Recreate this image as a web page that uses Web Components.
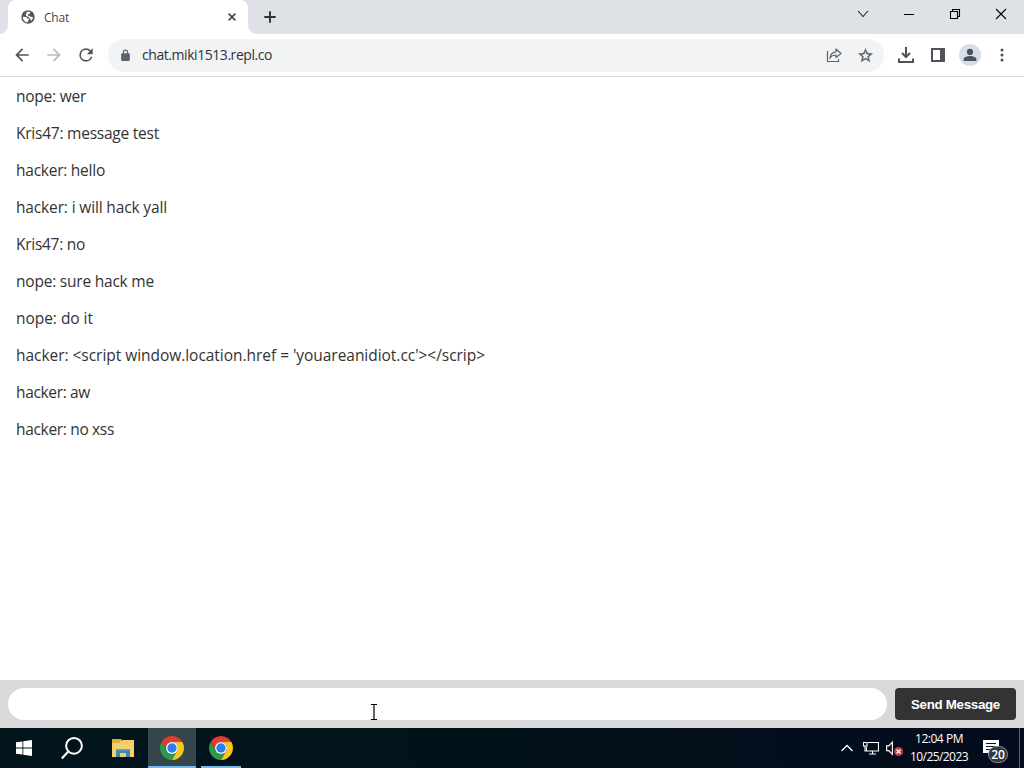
<!DOCTYPE html>
<html lang="en">
<head>
<meta charset="utf-8">
<title>Chat</title>
<style>
    html,
    body {
        margin: 0;
        height: 100%;
        overflow: hidden;
        font-family: "Open Sans", "Noto Sans", sans-serif;
    }
</style>
</head>
<body>
<desktop-screen>
    <browser-tabs slot="tabs" label="Chat"></browser-tabs>
    <browser-toolbar slot="toolbar" url="chat.miki1513.repl.co"></browser-toolbar>
    <chat-log slot="page">
        <chat-message width="70">nope: wer</chat-message>
        <chat-message width="143">Kris47: message test</chat-message>
        <chat-message width="89">hacker: hello</chat-message>
        <chat-message width="151">hacker: i will hack yall</chat-message>
        <chat-message width="69">Kris47: no</chat-message>
        <chat-message width="138">nope: sure hack me</chat-message>
        <chat-message width="77">nope: do it</chat-message>
        <chat-message width="469">hacker: &lt;script window.location.href = 'youareanidiot.cc'&gt;&lt;/scrip&gt;</chat-message>
        <chat-message width="74">hacker: aw</chat-message>
        <chat-message width="98">hacker: no xss</chat-message>
    </chat-log>
    <chat-composer slot="composer">Send Message</chat-composer>
    <task-bar slot="taskbar"></task-bar>
</desktop-screen>

<script>
const icons = {
    globe: ['0 0 24 24', '<circle cx="12" cy="12" r="11.500" fill="#53575b"/><path fill="#fff" d="M3.2 11.5 9 12.2l2 2.3 2.5.5.5 2-2.3 1.8-.7 2.5C6.800 21 3.200 17 3.200 11.500zM9.500 3.500c2-.7 4.500-.7 6.300.2l-.8 2.800-2.800.8-.7 2.200 3.300.6 1.700 2 2.500-.5 1.500 1.400c-.3 2.500-1.600 4.600-3.400 5.900l-.6-3.900-2.500-1-1-2.500-3.500-.8-1.700-2.500 1.700-1.700z"/>'],
    close: ['0 0 16 16', '<path d="m3.500 3.500 9 9m0-9-9 9" fill="none" stroke="#3c4043" stroke-width="2"/>'],
    plus: ['0 0 16 16', '<path d="M8 1.500v13M1.500 8h13" fill="none" stroke="#303236" stroke-width="2.200"/>'],
    chevron: ['0 0 12 12', '<path d="m1 3 5 5.500L11 3" fill="none" stroke="#222" stroke-width="1.100"/>'],
    minimize: ['0 0 12 12', '<path d="M1 6.500h10" fill="none" stroke="#000"/>'],
    restore: ['0 0 12 12', '<path d="M1.500 3.500h7v7h-7zM3.500 3.500v-2h7v7h-2" fill="none" stroke="#000" stroke-width="1.100"/>'],
    exit: ['0 0 12 12', '<path d="m1 1 10 10M11 1 1 11" fill="none" stroke="#000" stroke-width="1.100"/>'],
    back: ['0 0 24 24', '<path d="M20 11H7.830l5.590-5.590L12 4l-8 8 8 8 1.410-1.410L7.830 13H20z"/>'],
    forward: ['0 0 24 24', '<path d="m12 4-1.410 1.410L16.170 11H4v2h12.170l-5.580 5.590L12 20l8-8z"/>'],
    reload: ['0 0 24 24', '<path d="M17.650 6.350A7.960 7.960 0 0 0 12 4a8 8 0 1 0 7.730 10h-2.080A6 6 0 1 1 12 6c1.660 0 3.140.69 4.220 1.780L13 11h7V4z"/>'],
    lock: ['0 0 24 24', '<path d="M18 8h-1V6A5 5 0 0 0 7 6v2H6a2 2 0 0 0-2 2v10c0 1.100.9 2 2 2h12a2 2 0 0 0 2-2V10a2 2 0 0 0-2-2zM9 8V6a3 3 0 0 1 6 0v2z"/>'],
    share: ['0 0 16 16', '<path d="M1.500 4v10.500h11V12M10 2l5 4.500-5 4V8C7 8 5 9 3.800 11.300 4.300 7.500 6.500 5.200 10 4.800z" fill="none" stroke="#5f6368" stroke-width="1.200" stroke-linejoin="round"/>'],
    star: ['0 0 24 24', '<path stroke="currentColor" stroke-width=".5" d="m22 9.240-7.190-.62L12 2 9.190 8.630 2 9.240l5.460 4.730L5.820 21 12 17.270 18.180 21l-1.630-7.030zM12 15.400l-3.760 2.270 1-4.280-3.320-2.880 4.380-.38L12 6.100l1.710 4.040 4.380.38-3.320 2.880 1 4.280z"/>'],
    download: ['0 0 16 16', '<path d="M8 0v9.500M4 6l4 4 4-4M1 11.500V15h14v-3.500" fill="none" stroke="#505357" stroke-width="2"/>'],
    panel: ['0 0 14 14', '<path d="M0 0h14v14H0zM2 2v10h7V2z" fill-rule="evenodd"/>'],
    person: ['0 0 24 24', '<circle cx="12" cy="12" r="12" fill="#d8dee7"/><circle cx="12" cy="8.700" r="3.400" fill="#4b5261"/><path d="M5 18.500v-1.700c0-2.400 4.200-3.600 7-3.600s7 1.200 7 3.600v1.700z" fill="#4b5261"/>'],
    dots: ['0 0 16 16', '<circle cx="8" cy="3" r="1.500"/><circle cx="8" cy="8" r="1.500"/><circle cx="8" cy="13" r="1.500"/>'],
    windows: ['0 0 16 16', '<path fill="#fff" d="M0 2.300 6.500 1.400v6.200H0zM7.300 1.300 16 0v7.600H7.300zM0 8.400h6.500v6.200L0 13.700zM7.300 8.400H16V16l-8.700-1.300z"/>'],
    search: ['0 0 24 24', '<circle cx="14" cy="9.800" r="7.900" fill="none" stroke="#fff" stroke-width="2"/><path d="m8.300 15.500-6.500 7" stroke="#fff" stroke-width="2.200"/>'],
    folder: ['0 0 22 18', '<path fill="#e3a93a" d="M0 0h9l2 2H0z"/><path fill="#f5d06a" d="M0 2h10l1-1h11v17H0z"/><path fill="#e0ad48" d="M0 2h8v2H0z"/><path fill="#3f86b5" d="M4 10h14v8h-4v-4H8v4H4z"/><path fill="#5ba3cc" d="M4 10h14v1.500H4z"/>'],
    chrome: ['0 0 48 48', '<path fill="#e33b2e" d="M24 12h20.780A24 24 0 0 0 3.220 12L13.600 30A12 12 0 0 1 24 12z"/><path fill="#2a9b48" d="M34.390 30 24 48A24 24 0 0 1 3.220 12L13.600 30a12 12 0 0 0 20.790 0z"/><path fill="#fbc61a" d="M24 12h20.780A24 24 0 0 1 24 48l10.390-18A12 12 0 0 0 24 12z"/><circle cx="24" cy="24" r="12" fill="#fff"/><circle cx="24" cy="24" r="9.400" fill="#2b7de9"/>'],
    caret: ['0 0 12 12', '<path d="m.5 9 5.500-5.500L11.500 9" fill="none" stroke="#fff" stroke-width="1.300"/>'],
    network: ['0 0 16 14', '<path d="M5 1.500h10.500v8.500H3.500V6M9.500 10v3M6 13h7M.5 1.500H4v3.500H.5zM2 5v5h1.500" fill="none" stroke="#fff" stroke-width="1.100"/>'],
    muted: ['0 0 16 16', '<path d="M.6 5.500h2L6 2v11.500L2.600 10h-2z" fill="none" stroke="#fff" stroke-width="1.100"/><circle cx="11.800" cy="10.800" r="4.200" fill="#c93a3a"/><path d="m9.900 8.900 3.800 3.800m0-3.800-3.800 3.800" stroke="#fff" stroke-width="1.200"/>'],
    notes: ['0 0 16 16', '<path fill="#fff" d="M0 0h16v13H8l-3 3v-3H0z"/><path d="M3 3.500h10M3 6.500h10M3 9.500h6" stroke="#071322" stroke-width="1.200"/>'],
    ibeam: ['0 0 8 16', '<path d="M1 .5h2.500l.5.5.5-.5H7M4 1v14M1 15.500h2.500l.5-.5.5.5H7" fill="none" stroke="#000" stroke-width="1.200"/>'],
};

class ShadowElement extends HTMLElement {
    connectedCallback() {
        if (this.shadowRoot) {
            return;
        }
        const template = document.createElement('template');
        template.innerHTML = this.render();
        this.attachShadow({ mode: 'open' }).appendChild(
            template.content.cloneNode(true)
        );
    }
}

class UiIcon extends ShadowElement {
    render() {
        const [box, shapes] = icons[this.getAttribute('name')];
        const width = this.getAttribute('w');
        const height = this.getAttribute('h') || width;
        return `
        <style>
        :host { display: block; flex: none; width: ${width}px; height: ${height}px; }
        svg { display: block; fill: currentColor; }
        </style>
        <svg width="${width}" height="${height}" viewBox="${box}">${shapes}</svg>`;
    }
}

// Spreads its text over a given width by adjusting the tracking.
class FitText extends ShadowElement {
    render() {
        return `
        <style>
        :host { display: block; flex: none; }
        span { display: block; width: max-content; white-space: pre; }
        </style>
        <span>${escapeText(this.getAttribute('text'))}</span>`;
    }

    connectedCallback() {
        super.connectedCallback();
        const span = this.shadowRoot.querySelector('span');
        const width = parseFloat(this.getAttribute('width'));
        const spacing =
            (width - span.getBoundingClientRect().width) /
            span.textContent.length;
        span.style.letterSpacing = `${spacing.toFixed(3)}px`;
    }
}

class DesktopScreen extends ShadowElement {
    render() {
        return `
        <style>
        :host {
            display: grid;
            grid-template-rows: 34px 43px 1fr 48px 40px;
            height: 100vh;
            background: #fff;
        }
        </style>
        <slot name="tabs"></slot>
        <slot name="toolbar"></slot>
        <slot name="page"></slot>
        <slot name="composer"></slot>
        <slot name="taskbar"></slot>`;
    }
}

class BrowserTabs extends ShadowElement {
    render() {
        return `
        <style>
        :host { display: flex; background: #dee1e6; padding-left: 8px; }
        .tab {
            box-sizing: border-box;
            position: relative;
            display: flex;
            align-items: center;
            width: 240px;
            padding: 0 10px 0 13px;
            background: #fff;
            border-radius: 8px 8px 0 0;
            font-size: 12px;
            color: #45494d;
        }
        .tab::before,
        .tab::after {
            content: "";
            position: absolute;
            bottom: 0;
            width: 8px;
            height: 8px;
        }
        .tab::before { left: -8px; background: radial-gradient(circle at 0 0, #dee1e6 7.5px, #fff 8px); }
        .tab::after { right: -8px; background: radial-gradient(circle at 100% 0, #dee1e6 7.5px, #fff 8px); }
        fit-text { margin: 0 auto 0 9px; }
        .new { align-self: center; margin-left: 15px; }
        .controls {
            display: flex;
            align-items: center;
            gap: 34px;
            margin-left: auto;
            padding: 0 17px 6px 0;
        }
        </style>
        <div class="tab">
            <ui-icon name="globe" w="14"></ui-icon>
            <fit-text text="${this.getAttribute('label')}" width="25"></fit-text>
            <ui-icon name="close" w="12"></ui-icon>
        </div>
        <ui-icon class="new" name="plus" w="14"></ui-icon>
        <div class="controls">
            <ui-icon name="chevron" w="12"></ui-icon>
            <ui-icon name="minimize" w="12"></ui-icon>
            <ui-icon name="restore" w="12"></ui-icon>
            <ui-icon name="exit" w="12"></ui-icon>
        </div>`;
    }
}

class BrowserToolbar extends ShadowElement {
    render() {
        return `
        <style>
        :host {
            box-sizing: border-box;
            display: flex;
            align-items: center;
            padding: 0 12px;
            border-bottom: 1px solid #d9dbde;
            color: #505357;
        }
        .nav { display: flex; gap: 12px; }
        .forward { color: #b8babd; }
        .address {
            box-sizing: border-box;
            display: flex;
            align-items: center;
            flex: 1;
            height: 33px;
            margin: 0 14px 0 12px;
            padding: 0 10px 0 11px;
            border-radius: 17px;
            background: #f1f3f4;
            font-size: 14px;
            color: #5f6368;
        }
        fit-text { margin: 0 auto 2px 10px; color: #303236; }
        .star { margin-left: 15px; }
        .actions { display: flex; align-items: center; gap: 14px; }
        .panel { margin-left: 3px; }
        .dots { margin: 0 2px 0 -1px; }
        </style>
        <div class="nav">
            <ui-icon name="back" w="20"></ui-icon>
            <ui-icon class="forward" name="forward" w="20"></ui-icon>
            <ui-icon name="reload" w="20"></ui-icon>
        </div>
        <div class="address">
            <ui-icon name="lock" w="13"></ui-icon>
            <fit-text text="${this.getAttribute('url')}" width="130"></fit-text>
            <ui-icon name="share" w="16"></ui-icon>
            <ui-icon class="star" name="star" w="17"></ui-icon>
        </div>
        <div class="actions">
            <ui-icon name="download" w="16"></ui-icon>
            <ui-icon class="panel" name="panel" w="14"></ui-icon>
            <ui-icon name="person" w="22"></ui-icon>
            <ui-icon class="dots" name="dots" w="16"></ui-icon>
        </div>`;
    }
}

class ChatLog extends ShadowElement {
    render() {
        return `
        <style>
        :host {
            display: flex;
            flex-direction: column;
            gap: 16px;
            padding: 9px 16px;
            font-size: 15.500px;
            line-height: 21px;
            color: #333;
        }
        </style>
        <slot></slot>`;
    }
}

class ChatMessage extends ShadowElement {
    render() {
        return `
        <style>
        :host { display: block; height: 21px; }
        </style>
        <fit-text text="${escapeText(this.textContent)}" width="${this.getAttribute('width')}"></fit-text>`;
    }
}

class ChatComposer extends ShadowElement {
    render() {
        return `
        <style>
        :host { display: flex; gap: 8px; padding: 8px; background: #d9d9d9; }
        .field { position: relative; flex: 1; border-radius: 16px; background: #fff; }
        .cursor { position: absolute; left: 362px; top: 16px; }
        button {
            display: grid;
            place-items: center;
            width: 121px;
            padding: 0;
            border: none;
            border-radius: 4px;
            background: #333;
            color: #fff;
            font: bold 13.333px "Liberation Sans", Arial, sans-serif;
        }
        </style>
        <div class="field"><ui-icon class="cursor" name="ibeam" w="8" h="16"></ui-icon></div>
        <button type="button"><fit-text text="${this.textContent}" width="89"></fit-text></button>`;
    }
}

class TaskButton extends ShadowElement {
    render() {
        return `
        <style>
        :host {
            box-sizing: border-box;
            position: relative;
            display: grid;
            place-items: center;
            width: 48px;
            height: 40px;
        }
        :host([active]) { background: #35464d; }
        :host([running])::after {
            content: "";
            position: absolute;
            left: 4px;
            right: 4px;
            bottom: 0;
            height: 2px;
            background: #76b9ed;
        }
        :host([active])::after { left: 0; right: 0; }
        </style>
        <slot></slot>`;
    }
}

class TaskBar extends ShadowElement {
    render() {
        return `
        <style>
        :host {
            display: flex;
            background: linear-gradient(90deg, #02151d, #02121b 50%, #030b1c);
            color: #fff;
            font-size: 12px;
        }
        .apps { display: flex; gap: 1px; margin-left: 3px; }
        .tray { display: flex; align-items: center; margin-left: auto; }
        .network { margin-left: 10px; }
        .muted { margin-left: 7px; }
        .clock {
            display: flex;
            flex-direction: column;
            align-items: center;
            width: 58px;
            margin: 0 15px 0 7px;
            line-height: 18px;
        }
        .notes { position: relative; margin-right: 20px; }
        .badge {
            position: absolute;
            left: 5px;
            top: 6px;
            box-sizing: border-box;
            width: 20px;
            height: 17px;
            border: 1px solid #888d93;
            border-radius: 9px;
            background: #303841;
            font-size: 12px;
            font-weight: 600;
            line-height: 15px;
            text-align: center;
        }
        .desktop { align-self: stretch; width: 4px; border-left: 1px solid #55606b; }
        </style>
        <task-button><ui-icon name="windows" w="16"></ui-icon></task-button>
        <task-button><ui-icon name="search" w="24"></ui-icon></task-button>
        <div class="apps">
            <task-button><ui-icon name="folder" w="22" h="18"></ui-icon></task-button>
            <task-button active running><ui-icon name="chrome" w="24"></ui-icon></task-button>
            <task-button running><ui-icon name="chrome" w="24"></ui-icon></task-button>
        </div>
        <div class="tray">
            <ui-icon name="caret" w="12"></ui-icon>
            <ui-icon class="network" name="network" w="16" h="14"></ui-icon>
            <ui-icon class="muted" name="muted" w="17"></ui-icon>
            <div class="clock">
                <fit-text text="12:04 PM" width="48"></fit-text>
                <fit-text text="10/25/2023" width="58"></fit-text>
            </div>
            <div class="notes">
                <ui-icon name="notes" w="16"></ui-icon>
                <span class="badge">20</span>
            </div>
            <div class="desktop"></div>
        </div>`;
    }
}

customElements.define('ui-icon', UiIcon);
customElements.define('fit-text', FitText);
customElements.define('task-button', TaskButton);
customElements.define('desktop-screen', DesktopScreen);
customElements.define('browser-tabs', BrowserTabs);
customElements.define('browser-toolbar', BrowserToolbar);
customElements.define('chat-log', ChatLog);
customElements.define('chat-message', ChatMessage);
customElements.define('chat-composer', ChatComposer);
customElements.define('task-bar', TaskBar);

function escapeText(text) {
    return text
        .replace(/&/g, '&amp;')
        .replace(/</g, '&lt;')
        .replace(/>/g, '&gt;');
}
</script>
</body>
</html>
